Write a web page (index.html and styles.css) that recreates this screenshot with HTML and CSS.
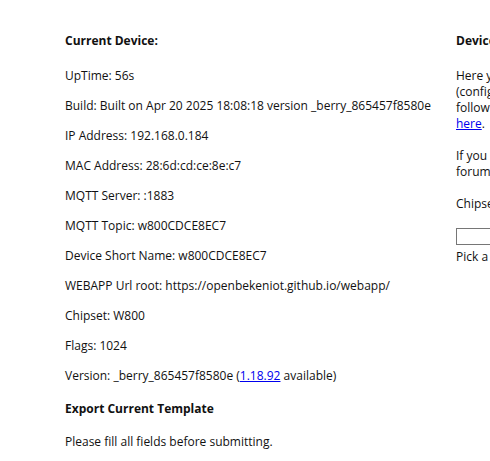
FILE: index.html
```html
<!DOCTYPE html>
<html lang="en">

<head>
    <meta charset="UTF-8">
    <title>Device Info</title>
    <link rel="stylesheet" href="styles.css">
</head>

<body>
    <div class="columns">
        <!-- left: current device -->
        <section class="current">
            <h4>Current Device:</h4>
            <p>UpTime: 56s</p>
            <p>Build: Built on Apr 20 2025 18:08:18 version _berry_865457f8580e</p>
            <p>IP Address: 192.168.0.184</p>
            <p>MAC Address: 28:6d:cd:ce:8e:c7</p>
            <p>MQTT Server: :1883</p>
            <p>MQTT Topic: w800CDCE8EC7</p>
            <p>Device Short Name: w800CDCE8EC7</p>
            <p>WEBAPP Url root: https://openbekeniot.github.io/webapp/</p>
            <p>Chipset: W800</p>
            <p>Flags: 1024</p>
            <p>Version: _berry_865457f8580e (<a href="#">1.18.92</a> available)</p>
            <h4 class="export">Export Current Template</h4>
            <p>Please fill all fields before submitting.</p>
        </section>
        <!-- right: templates -->
        <section class="templates">
            <h4>Device Templates</h4>
            <p>Here you can get a template for your device<br>(configuration) from our database. Please<br>follow the guide for flashing described<br><a href="#">here</a>.</p>
            <p>If you can't find your device, ask on our<br>forum.</p>
            <p>Chipset: W800</p>
            <input class="filter" type="text">
            <div class="hint">Pick a device from the list</div>
        </section>
    </div>
</body>

</html>
```

FILE: styles.css
```css
* {
    box-sizing: border-box;
}

body {
    margin: 0;
    font-family: "Open Sans", "Noto Sans", sans-serif;
    font-size: 12px;
    line-height: 16px;
    color: #111;
    background: #fff;
    overflow: hidden;
}

.columns {
    display: flex;
    padding: 33px 0 0 65px;
    width: 900px;
}

.current {
    width: 391px;
    flex: none;
}

.templates {
    width: 400px;
    flex: none;
}

h4 {
    margin: 0 0 19px;
    font-size: 12px;
    font-weight: bold;
}

p {
    margin: 0 0 14px;
}

.templates p {
    margin-bottom: 16px;
}

.export {
    margin-top: 17px;
    margin-bottom: 17px;
}

a {
    color: #0000ee;
}

.filter {
    display: block;
    width: 300px;
    height: 17px;
    margin: 12px 0 4px;
    border: 1px solid #767676;
    padding: 0;
}

.hint {
    line-height: 16px;
}
```
